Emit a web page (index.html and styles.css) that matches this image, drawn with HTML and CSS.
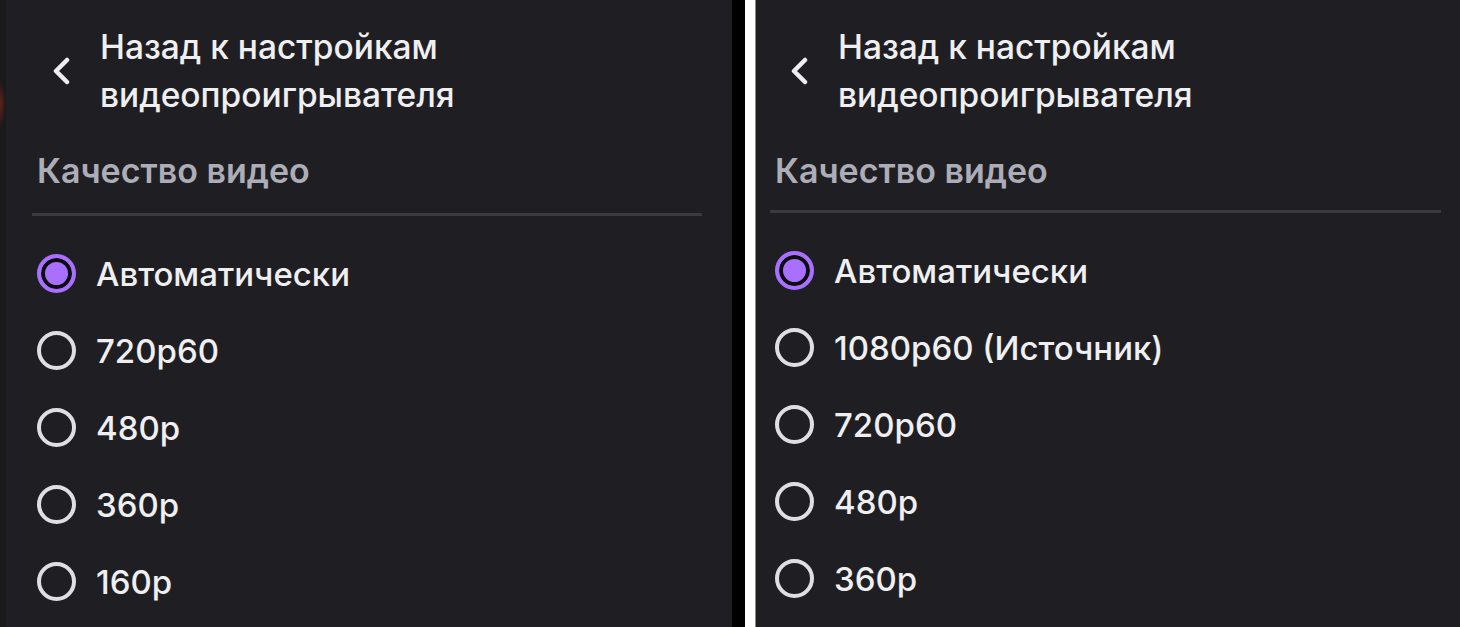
FILE: index.html
```html
<!DOCTYPE html>
<html lang="ru">
<head>
<meta charset="utf-8">
<title>Качество видео</title>
<link rel="stylesheet" href="styles.css">
</head>
<body>
<div class="screen">
  <section class="panel panel-left">
    <div class="edge"></div>
    <div class="menu">
      <button class="back">
        <svg class="chev" viewBox="0 0 18 28" width="18" height="28"><path d="M15 3 L4 14 L15 25" fill="none" stroke="#efeff1" stroke-width="4.5" stroke-linecap="round" stroke-linejoin="round"/></svg>
        <span class="back-text">Назад к настройкам<br>видеопроигрывателя</span>
      </button>
      <div class="section-title">Качество видео</div>
      <div class="divider"></div>
      <ul class="options">
        <li class="option selected"><span class="radio"></span><span class="label">Автоматически</span></li>
        <li class="option"><span class="radio"></span><span class="label">720p60</span></li>
        <li class="option"><span class="radio"></span><span class="label">480p</span></li>
        <li class="option"><span class="radio"></span><span class="label">360p</span></li>
        <li class="option"><span class="radio"></span><span class="label">160p</span></li>
      </ul>
    </div>
  </section>
  <div class="sep-black"></div>
  <div class="sep-white"></div>
  <section class="panel panel-right">
    <div class="menu">
      <button class="back">
        <svg class="chev" viewBox="0 0 18 28" width="18" height="28"><path d="M15 3 L4 14 L15 25" fill="none" stroke="#efeff1" stroke-width="4.5" stroke-linecap="round" stroke-linejoin="round"/></svg>
        <span class="back-text">Назад к настройкам<br>видеопроигрывателя</span>
      </button>
      <div class="section-title">Качество видео</div>
      <div class="divider"></div>
      <ul class="options">
        <li class="option selected"><span class="radio"></span><span class="label">Автоматически</span></li>
        <li class="option"><span class="radio"></span><span class="label">1080p60 (Источник)</span></li>
        <li class="option"><span class="radio"></span><span class="label">720p60</span></li>
        <li class="option"><span class="radio"></span><span class="label">480p</span></li>
        <li class="option"><span class="radio"></span><span class="label">360p</span></li>
      </ul>
    </div>
  </section>
</div>
</body>
</html>
```
FILE: styles.css
```css
* { box-sizing: border-box; }
html, body {
  margin: 0;
  padding: 0;
  background: #000;
  overflow: hidden;
}
body {
  font-family: Inter, "Noto Sans", "Liberation Sans", sans-serif;
  color: #efeff1;
}
.screen {
  display: flex;
  width: 1460px;
  height: 627px;
}
.panel {
  background: #1f1f23;
  height: 627px;
  display: flex;
  overflow: hidden;
}
.panel-left {
  width: 732px;
  flex: none;
}
.edge {
  width: 6px;
  flex: none;
  background: radial-gradient(ellipse 6px 24px at 0 104px, rgba(160,40,20,0.55), rgba(0,0,0,0) 100%), #19191c;
}
.panel-right {
  flex: 1;
}
.sep-black {
  width: 13px;
  flex: none;
  background: #000;
}
.sep-white {
  width: 11px;
  flex: none;
  background: #fff;
  border-right: 1px solid #8a8a8a;
}
.menu {
  flex: 1;
  display: flex;
  flex-direction: column;
}
.panel-left .menu {
  padding: 23px 30px 0 26px;
}
.panel-right .menu {
  padding: 23px 19px 0 14px;
}
.panel-right .divider {
  margin-top: 19px;
}
.back {
  display: flex;
  align-items: center;
  gap: 30px;
  background: none;
  border: 0;
  padding: 0 0 0 20px;
  margin: 0;
  font: inherit;
  color: inherit;
  text-align: left;
  cursor: pointer;
}
.chev {
  flex: none;
  display: block;
}
.back-text {
  font-size: 33.5px;
  font-weight: 500;
  line-height: 48px;
}
.section-title {
  margin-top: 32px;
  padding-left: 5px;
  font-size: 34px;
  font-weight: 600;
  line-height: 40px;
  color: #adadb8;
}
.divider {
  margin-top: 22px;
  height: 3px;
  background: #3a3a3e;
}
.options {
  list-style: none;
  margin: 19px 0 0;
  padding: 0 0 0 5px;
}
.option {
  display: flex;
  align-items: center;
  gap: 20px;
  height: 77px;
}
.radio {
  flex: none;
  width: 39px;
  height: 39px;
  border-radius: 50%;
  border: 4.5px solid #dedee3;
}
.option.selected .radio {
  border-color: #a970ff;
  background: #a970ff;
  box-shadow: inset 0 0 0 4px #0e0e10;
}
.label {
  font-size: 33px;
  font-weight: 500;
  line-height: 40px;
}
```
